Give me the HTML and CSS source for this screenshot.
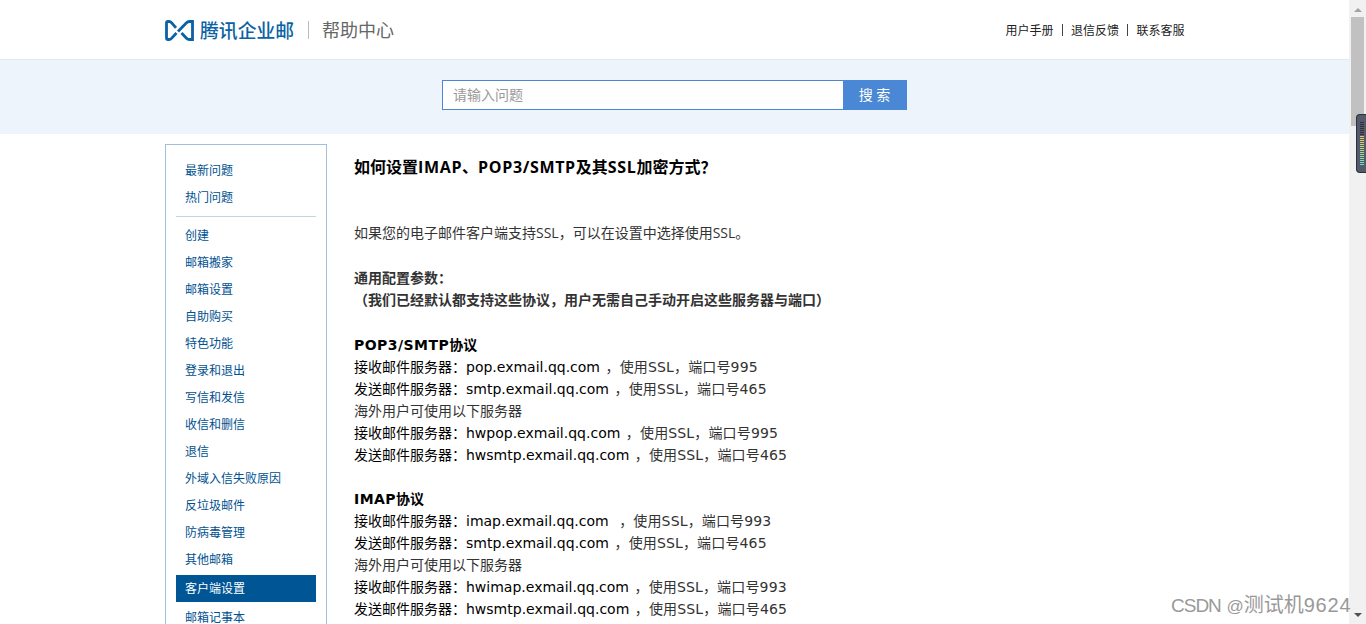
FILE: index.html
```html
<!DOCTYPE html>
<html lang="zh-CN">
<head>
  <meta charset="utf-8">
  <title>腾讯企业邮 帮助中心</title>
  <link rel="stylesheet" href="styles.css">
</head>
<body>
<div class="window">
  <div class="page">
    <header class="header">
      <div class="wrap header-inner">
        <div class="logo">
          <svg class="logo-icon" width="29" height="21" viewBox="0 0 29 21" fill="none" stroke="#0a62a5" stroke-width="2.8">
            <path d="M11 7.800L6.500 2.600Q5.500 1.500 4 1.500H3Q1.500 1.500 1.500 3V18Q1.500 19.500 3 19.500H4Q5.500 19.500 6.500 18.400L11.500 13"/>
            <path d="M13 11.500L21.500 2.800Q22.700 1.500 24.500 1.500H27.500V19.500H24.500Q22.700 19.500 21.500 18.200L16.500 13"/>
          </svg>
          <span class="logo-text">腾讯企业邮</span>
          <span class="logo-line"></span>
          <span class="logo-sub">帮助中心</span>
        </div>
        <div class="top-links">
          <a>用户手册</a><i></i><a>退信反馈</a><i></i><a>联系客服</a>
        </div>
      </div>
    </header>

    <div class="search-bar">
      <div class="search">
        <input class="search-input" type="text" placeholder="请输入问题">
        <button class="search-btn">搜 索</button>
      </div>
    </div>

    <div class="wrap main">
      <ul class="menu">
        <li>最新问题</li>
        <li>热门问题</li>
        <li class="line"></li>
        <li>创建</li>
        <li>邮箱搬家</li>
        <li>邮箱设置</li>
        <li>自助购买</li>
        <li>特色功能</li>
        <li>登录和退出</li>
        <li>写信和发信</li>
        <li>收信和删信</li>
        <li>退信</li>
        <li>外域入信失败原因</li>
        <li>反垃圾邮件</li>
        <li>防病毒管理</li>
        <li>其他邮箱</li>
        <li class="current">客户端设置</li>
        <li>邮箱记事本</li>
      </ul>

      <div class="article">
        <h1>如何设置<span>IMAP</span>、<span>POP3/SMTP</span>及其<span>SSL</span>加密方式？</h1>
        <p class="intro">如果您的电子邮件客户端支持SSL，可以在设置中选择使用SSL。</p>
        <p class="intro"><b>通用配置参数：<br>（我们已经默认都支持这些协议，用户无需自己手动开启这些服务器与端口）</b></p>
        <div class="servers">
          <h2><span>POP3/SMTP</span>协议</h2>
          <p><em>接收邮件服务器：<span class="host">pop.exmail.qq.com</span></em><span class="port">，使用SSL，端口号995</span></p>
          <p><em>发送邮件服务器：<span class="host">smtp.exmail.qq.com</span></em><span class="port">，使用SSL，端口号465</span></p>
          <p>海外用户可使用以下服务器</p>
          <p><em>接收邮件服务器：<span class="host">hwpop.exmail.qq.com</span></em><span class="port">，使用SSL，端口号995</span></p>
          <p><em>发送邮件服务器：<span class="host">hwsmtp.exmail.qq.com</span></em><span class="port">，使用SSL，端口号465</span></p>
        </div>
        <div class="servers">
          <h2><span>IMAP</span>协议</h2>
          <p><em>接收邮件服务器：<span class="host">imap.exmail.qq.com</span></em><span class="port far">，使用SSL，端口号993</span></p>
          <p><em>发送邮件服务器：<span class="host">smtp.exmail.qq.com</span></em><span class="port">，使用SSL，端口号465</span></p>
          <p>海外用户可使用以下服务器</p>
          <p><em>接收邮件服务器：<span class="host">hwimap.exmail.qq.com</span></em><span class="port">，使用SSL，端口号993</span></p>
          <p><em>发送邮件服务器：<span class="host">hwsmtp.exmail.qq.com</span></em><span class="port">，使用SSL，端口号465</span></p>
        </div>
      </div>
    </div>
  </div>

  <div class="scrollbar">
    <span class="arrow up"></span>
    <span class="thumb"></span>
    <span class="arrow down"></span>
  </div>
</div>

<div class="meter"><span class="meter-bars"></span></div>
<div class="watermark"><span class="wm-name">CSDN</span> <span class="wm-at">@</span>测试机<span class="wm-num">9624</span></div>
</body>
</html>
```

FILE: styles.css
```css
* {
  box-sizing: border-box;
}

body {
  margin: 0;
  height: 624px;
  overflow: hidden;
  position: relative;
  background: #fff;
  color: #333;
  font-family: "Open Sans", "Noto Sans CJK SC", sans-serif;
  font-size: 14px;
}

h1, h2, p, ul {
  margin: 0;
  padding: 0;
}

.window {
  display: flex;
  height: 624px;
}

.page {
  flex: 1;
  overflow: hidden;
}

.wrap {
  width: 1020px;
  margin: 0 auto;
}

/* header */
.header {
  height: 60px;
  border-bottom: 1px solid #e6e9ec;
}

.header-inner {
  display: flex;
  justify-content: space-between;
  align-items: center;
  height: 60px;
}

.logo {
  display: flex;
  align-items: center;
}

.logo-text {
  margin-left: 6.6px;
  color: #0a62a5;
  font-size: 18.8px;
  line-height: 24px;
  font-weight: 500;
  font-family: "Noto Sans CJK SC", sans-serif;
}

.logo-line {
  width: 1px;
  height: 18px;
  margin: 0 13px 0 14px;
  background: #bbb;
}

.logo-sub {
  color: #666;
  font-size: 18px;
  line-height: 24px;
}

.top-links {
  display: flex;
  align-items: center;
  font-size: 12px;
  color: #222;
}

.top-links i {
  width: 1px;
  height: 12px;
  margin: 0 8px 0 8.5px;
  background: #444;
}

/* search */
.search-bar {
  height: 74px;
  padding-top: 20px;
  background: #edf4fb;
}

.search {
  display: flex;
  width: 465px;
  height: 30px;
  margin: 0 auto;
}

.search-input {
  width: 401px;
  padding: 0 10px 2px;
  border: 1px solid #4a87d4;
  border-right: 0;
  outline: 0;
  background: #fff;
  font: 14px "Open Sans", "Noto Sans CJK SC", sans-serif;
}

.search-input::placeholder {
  color: #999;
}

.search-btn {
  width: 64px;
  padding: 0 1px 2px 0;
  border: 0;
  background: #4a87d4;
  color: #fff;
  font: 14px "Open Sans", "Noto Sans CJK SC", sans-serif;
}

/* left menu */
.main {
  display: flex;
  align-items: flex-start;
  padding-top: 10px;
}

.menu {
  width: 162px;
  height: 600px;
  padding: 12px 10px;
  border: 1px solid #a0c0dc;
  list-style: none;
  color: #00518f;
  font-size: 12px;
}

.menu li {
  height: 27px;
  padding-left: 9.5px;
  line-height: 27px;
}

.menu .line {
  height: 1px;
  margin: 5px 0;
  background: #c0d8de;
}

.menu .current {
  margin: 2px 0;
  background: #005595;
  color: #fff;
}

/* article */
.article {
  flex: 1;
  padding: 12px 0 0 27.5px;
}

.article h1 {
  margin-bottom: 44px;
  color: #000;
  font-size: 16px;
  line-height: 22px;
}

.article h1 span {
  letter-spacing: 0.65px;
}

.intro {
  margin-bottom: 22.4px;
  line-height: 22.4px;
}

.servers {
  margin-bottom: 22px;
  line-height: 22px;
}

.servers p, .servers h2 {
  height: 22px;
  white-space: nowrap;
}

.servers h2 {
  color: #000;
  font: bold 14px/22px "DejaVu Sans", "Noto Sans CJK SC", sans-serif;
}

.servers h2 span {
  letter-spacing: 0.45px;
}

.servers em {
  color: #000;
  font-style: normal;
}

.host {
  font-family: "DejaVu Sans", sans-serif;
}

.port {
  margin-left: 5.5px;
  font-family: "DejaVu Sans", "Noto Sans CJK SC", sans-serif;
  letter-spacing: 0.15px;
}

.port.far {
  margin-left: 10.5px;
}

/* scrollbar */
.scrollbar {
  display: flex;
  flex-direction: column;
  align-items: center;
  width: 17px;
  padding: 8px 0 7px;
  background: #f1f1f1;
}

.arrow {
  border: 4px solid transparent;
}

.arrow.up {
  border-top: 0;
  border-bottom-color: #a3a3a3;
}

.arrow.down {
  margin-top: auto;
  border-bottom: 0;
  border-top-color: #505050;
}

.thumb {
  width: 13px;
  height: 109px;
  margin-top: 5px;
  background: #c1c1c1;
}

/* floating level meter over the scrollbar */
.meter {
  position: absolute;
  top: 114px;
  right: 0;
  width: 10px;
  height: 59px;
  padding: 6px 2px 0 3px;
  border: 1px solid #2d303d;
  border-right: 0;
  border-radius: 4px 0 0 4px;
  background: #555a6a;
}

.meter-bars {
  display: block;
  width: 4px;
  height: 45px;
  background:
    repeating-linear-gradient(#555a6a 0 1px, transparent 1px 2px),
    linear-gradient(#2d303c 0 14px, #f3c160 14px, #a9dc8c 30px, #62dccb);
}

.watermark {
  position: absolute;
  left: 1171px;
  top: 592px;
  color: #999;
  font: 20px/26px "Liberation Sans", "Noto Sans CJK SC", sans-serif;
  white-space: nowrap;
}

.wm-name {
  font-size: 19px;
  letter-spacing: -1px;
}

.wm-at {
  font-size: 17px;
}

.wm-num {
  letter-spacing: 0.8px;
}
```
